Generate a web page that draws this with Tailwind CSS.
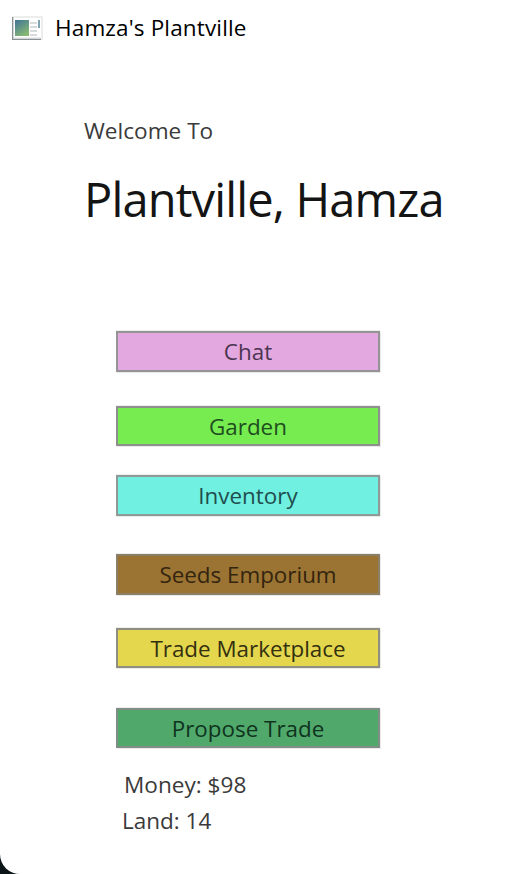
<!DOCTYPE html>
<html>
<head>
<meta charset="utf-8">
<script src="https://cdn.jsdelivr.net/npm/@tailwindcss/browser@4"></script>
</head>
<body class="bg-[#0b1416] overflow-hidden">
<div class="w-[508px] h-[874px] bg-white rounded-bl-[20px] font-['Open_Sans','Noto_Sans',sans-serif] overflow-hidden flex flex-col">
  <div class="flex items-center h-[28px] mt-[14px] pl-[12px]">
    <svg class="w-[31px] h-[24px] shrink-0" viewBox="0 0 31 24">
      <defs><linearGradient id="g" x1="0" y1="0" x2="0.6" y2="1"><stop offset="0" stop-color="#3f7398"/><stop offset="1" stop-color="#86b873"/></linearGradient></defs>
      <rect x="0" y="0" width="31" height="24" fill="#eceeee"/>
      <rect x="2" y="2" width="27" height="19" fill="#ffffff"/>
      <path d="M0 1V24H29" fill="none" stroke="#8a9194" stroke-width="2.5"/>
      <rect x="3" y="4" width="14" height="16" fill="url(#g)"/>
      <path d="M18 7h7M18 11h7M18 15h7M18 19h7" stroke="#d8dbdc" stroke-width="2"/>
      <rect x="26" y="4" width="2" height="8" fill="#7fa3b0"/>
    </svg>
    <span class="ml-[12px] text-[22.5px] tracking-[0.15px] leading-[28px] text-black">Hamza's Plantville</span>
  </div>
  <p class="ml-[84px] mt-[74px] text-[22.6px] leading-[30px] text-[#3a3a3a]">Welcome To</p>
  <h1 class="ml-[84px] mt-[25px] text-[47px] tracking-[-0.85px] leading-[56px] text-[#141414]">Plantville, Hamza</h1>
  <div class="ml-[116px] w-[264px] mt-[104px] flex flex-col text-[22.4px]">
    <button class="h-[41px] pt-[2px] border-2 border-[#949494] bg-[#e3a8df] text-[#4a3550] leading-none shadow-[1px_1px_0_#eaeaea,0_-1px_0_#eeeeee]">Chat</button>
    <button class="h-[40px] pt-[2px] mt-[34px] border-2 border-[#8f8f8f] bg-[#76ec50] text-[#1f4d1f] leading-none shadow-[1px_1px_0_#eaeaea,0_-1px_0_#eeeeee]">Garden</button>
    <button class="h-[41px] pt-[2px] mt-[29px] border-2 border-[#8f9a98] bg-[#6ff0e0] text-[#1f4d4d] leading-none shadow-[1px_1px_0_#eaeaea,0_-1px_0_#eeeeee]">Inventory</button>
    <button class="h-[41px] pt-[2px] mt-[38px] border-2 border-[#8a8068] bg-[#9b7433] text-[#33250f] leading-none shadow-[1px_1px_0_#eaeaea,0_-1px_0_#eeeeee]">Seeds Emporium</button>
    <button class="h-[40px] pt-[2px] mt-[33px] border-2 border-[#8f8f80] bg-[#e4d64d] text-[#333010] leading-none shadow-[1px_1px_0_#eaeaea,0_-1px_0_#eeeeee]">Trade Marketplace</button>
    <button class="h-[40px] pt-[2px] mt-[40px] border-2 border-[#7f8f85] bg-[#50a96a] text-[#0f3320] leading-none shadow-[1px_1px_0_#eaeaea,0_-1px_0_#eeeeee]">Propose Trade</button>
  </div>
  <p class="ml-[124px] mt-[22px] text-[22.6px] leading-[30px] text-[#3a3a3a]">Money: $98</p>
  <p class="ml-[122px] mt-[6px] text-[22.5px] leading-[30px] text-[#3a3a3a]">Land: 14</p>
</div>
</body>
</html>
